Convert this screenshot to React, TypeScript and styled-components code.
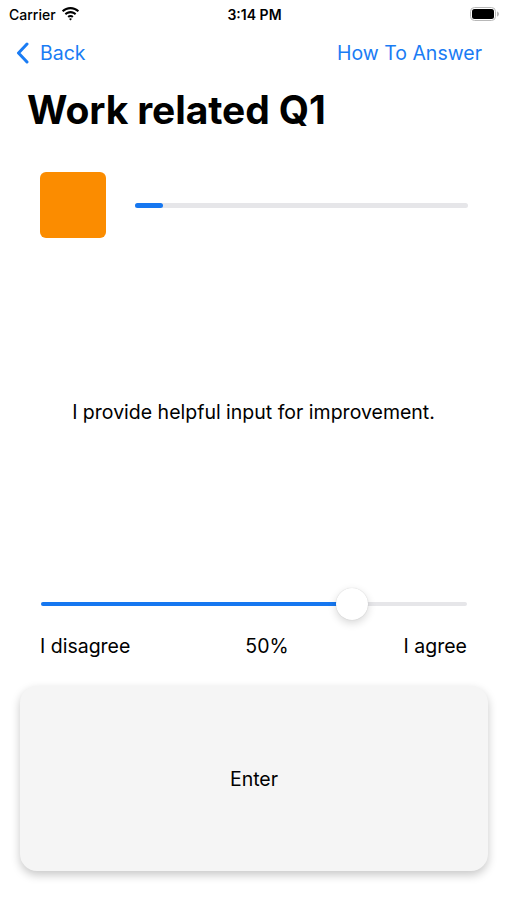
import React from "react";
import styled, { createGlobalStyle } from "styled-components";

const Global = createGlobalStyle`
  html, body { margin: 0; padding: 0; background: #ffffff; }
  body { font-family: Inter, "Noto Sans", sans-serif; color: #000; }
`;

const Screen = styled.div`
  width: 507px;
  height: 900px;
  display: flex;
  flex-direction: column;
  overflow: hidden;
`;

const StatusBar = styled.div`
  height: 28px;
  display: grid;
  grid-template-columns: 1fr auto 1fr;
  align-items: center;
  padding: 0 7px 0 9px;
  font-size: 14px;
  font-weight: 500;
`;

const StatusLeft = styled.div`
  display: flex;
  align-items: center;
  gap: 5px;
`;

const StatusTime = styled.div`
  font-weight: 600;
`;

const StatusRight = styled.div`
  display: flex;
  justify-content: flex-end;
  align-items: center;
`;

const NavBar = styled.div`
  height: 50px;
  display: flex;
  align-items: center;
  justify-content: space-between;
  padding: 0 25px 0 16px;
`;

const NavButton = styled.div`
  display: flex;
  align-items: center;
  gap: 11px;
  color: #1a7cf4;
  font-size: 19.5px;
`;

const Title = styled.h1`
  margin: 10px 0 0 27px;
  font-size: 39px;
  font-weight: 700;
  letter-spacing: -0.1px;
  line-height: 44px;
`;

const ProgressRow = styled.div`
  margin-top: 40px;
  display: flex;
  align-items: center;
  padding: 0 39px 0 40px;
  gap: 29px;
`;

const ColorSwatch = styled.div<{ $color: string }>`
  width: 66px;
  height: 66px;
  border-radius: 6px;
  background: ${(p) => p.$color};
  flex-shrink: 0;
`;

const Track = styled.div<{ $height: number }>`
  flex: 1;
  height: ${(p) => p.$height}px;
  border-radius: ${(p) => p.$height}px;
  background: #e6e6e9;
  position: relative;
`;

const Fill = styled.div`
  height: 100%;
  border-radius: inherit;
  background: #1677f0;
`;

const Question = styled.div`
  margin-top: 163px;
  text-align: center;
  font-size: 19.5px;
  line-height: 22px;
`;

const SliderArea = styled.div`
  margin-top: 164px;
  padding: 0 40px 0 41px;
`;

const SliderBox = styled.div`
  height: 34px;
  display: flex;
  align-items: center;
  position: relative;
`;

const Thumb = styled.div`
  position: absolute;
  top: 1px;
  width: 32px;
  height: 32px;
  margin-left: -16px;
  border-radius: 50%;
  background: #fff;
  box-shadow: 0 3px 8px rgba(0, 0, 0, 0.16), 0 0 1px rgba(0, 0, 0, 0.2);
`;

const Labels = styled.div`
  margin-top: 14px;
  display: flex;
  justify-content: space-between;
  font-size: 19.5px;
  line-height: 22px;
  margin-left: -1px;
`;

const EnterButton = styled.button`
  margin: 29px 19px 0 20px;
  height: 185px;
  border: none;
  border-radius: 17px;
  background: #f5f5f5;
  box-shadow: 0 4px 10px rgba(0, 0, 0, 0.22);
  font-family: inherit;
  font-size: 19.5px;
  color: #000;
`;

const WifiIcon = () => (
  <svg width="19" height="14" viewBox="0 0 19 14">
    <path d="M9.5 2.2c2.8 0 5.3 1.1 7.2 2.9l1.4-1.5C15.8 1.4 12.8 0.1 9.5 0.1S3.2 1.4 0.9 3.6l1.4 1.5C4.2 3.3 6.7 2.2 9.5 2.2z" fill="#000" />
    <path d="M9.5 6.2c1.7 0 3.2 0.7 4.4 1.8l1.4-1.5C13.8 5 11.8 4.1 9.5 4.1S5.2 5 3.7 6.5l1.4 1.5C6.3 6.9 7.8 6.2 9.5 6.2z" fill="#000" />
    <path d="M9.5 10.1c0.7 0 1.2 0.3 1.6 0.7l1.4-1.5C11.7 8.5 10.7 8.1 9.5 8.1S7.3 8.5 6.5 9.3l1.4 1.5c0.4-0.4 1-0.7 1.6-0.7z" fill="#000" />
    <path d="M9.5 13.4l1.4-1.5c-0.4-0.4-0.9-0.6-1.4-0.6s-1 0.2-1.4 0.6z" fill="#000" />
  </svg>
);

const BatteryIcon = () => (
  <svg width="30" height="14" viewBox="0 0 30 14">
    <rect x="0.5" y="0.5" width="25" height="13" rx="4" fill="none" stroke="#b8b8b8" />
    <rect x="2" y="2" width="22" height="10" rx="2.5" fill="#000" />
    <path d="M27 4.5c1.2 0.3 2 1.3 2 2.5s-0.8 2.2-2 2.5z" fill="#b8b8b8" />
  </svg>
);

const Chevron = () => (
  <svg width="13" height="22" viewBox="0 0 13 22">
    <path d="M11 2L2.5 11 11 20" fill="none" stroke="#1a7cf4" strokeWidth="3" strokeLinecap="round" strokeLinejoin="round" />
  </svg>
);

export default function App() {
  const progress = 0.085;
  const value = 0.73;
  return (
    <Screen>
      <Global />
      <StatusBar>
        <StatusLeft>
          <span>Carrier</span>
          <WifiIcon />
        </StatusLeft>
        <StatusTime>3:14 PM</StatusTime>
        <StatusRight>
          <BatteryIcon />
        </StatusRight>
      </StatusBar>
      <NavBar>
        <NavButton>
          <Chevron />
          <span>Back</span>
        </NavButton>
        <NavButton>How To Answer</NavButton>
      </NavBar>
      <Title>Work related Q1</Title>
      <ProgressRow>
        <ColorSwatch $color="#fb8c00" />
        <Track $height={5}>
          <Fill style={{ width: `${progress * 100}%` }} />
        </Track>
      </ProgressRow>
      <Question>I provide helpful input for improvement.</Question>
      <SliderArea>
        <SliderBox>
          <Track $height={4}>
            <Fill style={{ width: `${value * 100}%` }} />
          </Track>
          <Thumb style={{ left: `${value * 100}%` }} />
        </SliderBox>
        <Labels>
          <span>I disagree</span>
          <span>50%</span>
          <span>I agree</span>
        </Labels>
      </SliderArea>
      <EnterButton>Enter</EnterButton>
    </Screen>
  );
}
